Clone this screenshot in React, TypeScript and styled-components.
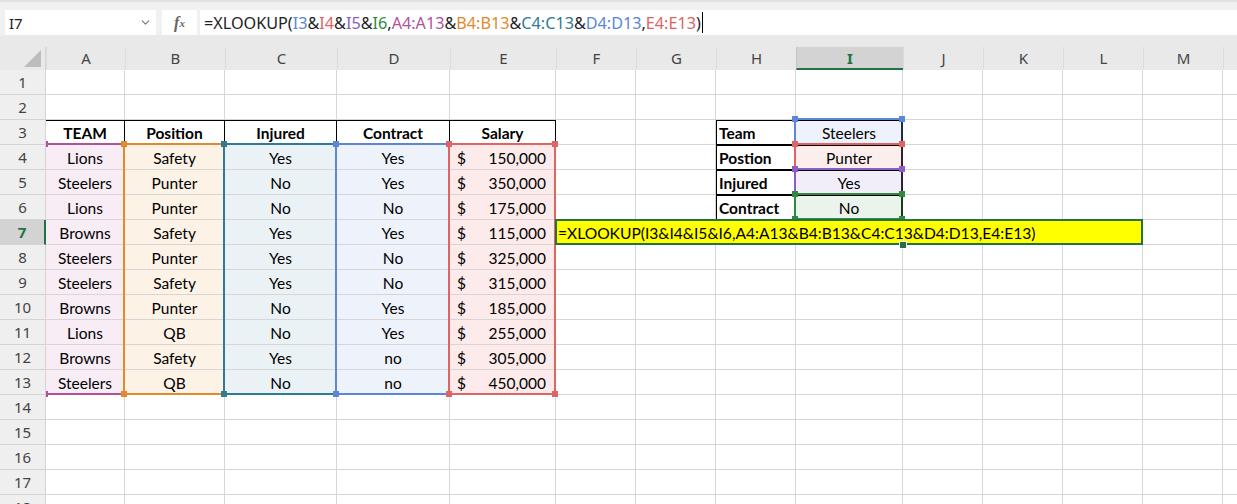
import React from "react";
import styled, { createGlobalStyle } from "styled-components";
import { ChevronDown } from "lucide-react";

const GlobalStyle = createGlobalStyle`
  html, body {
    margin: 0;
    padding: 0;
    background: #ffffff;
  }
`;

const COLS = ["A", "B", "C", "D", "E", "F", "G", "H", "I", "J", "K", "L", "M", "N"];
const WIDTHS = [79, 100, 112, 113, 106, 80, 80, 80, 107, 80, 80, 80, 80, 80];
const ROW_H = 25;
const HEAD_W = 46;
const ROWS = 18;

// left edge of each column inside the cell area
const colX = WIDTHS.reduce<number[]>((acc, w, i) => {
  acc.push(i === 0 ? 0 : acc[i - 1] + WIDTHS[i - 1]);
  return acc;
}, []);

const C = {
  magenta: "#b5509d",
  orange: "#e38a2c",
  teal: "#2f7b96",
  blue: "#5b86d9",
  red: "#e06464",
  purple: "#8a5ec4",
  green: "#2f8a3e",
  excel: "#217346",
};

type Spec = {
  v?: string;
  money?: string;
  bold?: boolean;
  align?: "left" | "center";
  fill?: string;
  bt?: boolean;
  br?: boolean;
  bb?: boolean;
  bl?: boolean;
};

const fills: Record<string, string> = {
  A: "#f8ecf5",
  B: "#fdf2e6",
  C: "#ebf2f5",
  D: "#eef2fb",
  E: "#fcebea",
};

const data = [
  ["Lions", "Safety", "Yes", "Yes", "150,000"],
  ["Steelers", "Punter", "No", "Yes", "350,000"],
  ["Lions", "Punter", "No", "No", "175,000"],
  ["Browns", "Safety", "Yes", "Yes", "115,000"],
  ["Steelers", "Punter", "Yes", "No", "325,000"],
  ["Steelers", "Safety", "Yes", "No", "315,000"],
  ["Browns", "Punter", "No", "Yes", "185,000"],
  ["Lions", "QB", "No", "Yes", "255,000"],
  ["Browns", "Safety", "Yes", "no", "305,000"],
  ["Steelers", "QB", "No", "no", "450,000"],
];

const cells: Record<string, Spec> = {};
["TEAM", "Position", "Injured", "Contract", "Salary"].forEach((h, i) => {
  cells[COLS[i] + 3] = { v: h, bold: true, bt: true, br: true };
});
data.forEach((row, r) => {
  row.forEach((v, i) => {
    const key = COLS[i] + (r + 4);
    cells[key] = i === 4 ? { money: v, fill: fills.E } : { v, fill: fills[COLS[i]] };
  });
});
const lookup = [
  ["Team", "Steelers", "#edf2fc"],
  ["Postion", "Punter", "#fdeeee"],
  ["Injured", "Yes", "#f2eef9"],
  ["Contract", "No", "#ebf4ec"],
];
lookup.forEach(([label, value, fill], i) => {
  cells["H" + (i + 3)] = { v: label, bold: true, align: "left", bt: true, bl: true, bb: true, br: true };
  cells["I" + (i + 3)] = { v: value, fill, bt: true, br: true, bb: true };
});

type Range = { c0: number; c1: number; r0: number; r1: number; color: string; edge?: string };
const ranges: Range[] = [
  { c0: 0, c1: 0, r0: 4, r1: 13, color: C.magenta },
  { c0: 1, c1: 1, r0: 4, r1: 13, color: C.orange },
  { c0: 2, c1: 2, r0: 4, r1: 13, color: C.teal },
  { c0: 3, c1: 3, r0: 4, r1: 13, color: C.blue },
  { c0: 4, c1: 4, r0: 4, r1: 13, color: C.red },
  { c0: 8, c1: 8, r0: 3, r1: 3, color: C.blue, edge: "#1f2a44" },
  { c0: 8, c1: 8, r0: 4, r1: 4, color: C.red, edge: "#3a1f22" },
  { c0: 8, c1: 8, r0: 5, r1: 5, color: C.purple, edge: "#2c2240" },
  { c0: 8, c1: 8, r0: 6, r1: 6, color: C.green, edge: "#1b3a22" },
];

const formulaParts: [string, string][] = [
  ["=XLOOKUP(", "#222"],
  ["I3", C.blue],
  ["&", "#222"],
  ["I4", C.red],
  ["&", "#222"],
  ["I5", C.purple],
  ["&", "#222"],
  ["I6", C.green],
  [",", "#222"],
  ["A4:A13", C.magenta],
  ["&", "#222"],
  ["B4:B13", C.orange],
  ["&", "#222"],
  ["C4:C13", C.teal],
  ["&", "#222"],
  ["D4:D13", C.blue],
  [",", "#222"],
  ["E4:E13", C.red],
  [")", "#222"],
];

const Window = styled.div`
  width: 1237px;
  height: 504px;
  overflow: hidden;
  background: #fff;
  display: flex;
  flex-direction: column;
`;

const FormulaBar = styled.div`
  height: 35px;
  box-sizing: border-box;
  padding: 8px 0 0 5px;
  display: flex;
  background: #f1f1f1;
  border-top: 2px solid #e2e2e2;
  flex-shrink: 0;
`;

const NameBox = styled.div`
  width: 151px;
  display: flex;
  align-items: center;
  justify-content: space-between;
  background: #fff;
  padding: 0 4px 0 4px;
  box-sizing: border-box;
  font-family: "Noto Sans", "Open Sans", sans-serif;
  font-size: 15px;
  color: #222;
`;

const FxBox = styled.div`
  width: 35px;
  margin-left: 6px;
  background: #fff;
  display: flex;
  align-items: center;
  justify-content: center;
  font-family: "Liberation Serif", serif;
  font-style: italic;
  font-weight: bold;
  font-size: 16px;
  color: #666;

  sub {
    font-size: 11px;
    vertical-align: -2px;
  }
`;

const FormulaInput = styled.div`
  flex: 1;
  margin-left: 3px;
  background: #fff;
  display: flex;
  align-items: center;
  padding-left: 4px;
  font-family: "Noto Sans", "Open Sans", sans-serif;
  font-size: 16.2px;
  white-space: nowrap;
`;

const Caret = styled.span`
  display: inline-block;
  width: 1px;
  height: 21px;
  background: #000;
  margin-left: 1px;
`;

const HeaderGap = styled.div`
  height: 12px;
  background: #e9e9e9;
  flex-shrink: 0;
`;

const Sheet = styled.div`
  position: relative;
  display: grid;
  grid-template-columns: ${HEAD_W}px ${WIDTHS.map((w) => w + "px").join(" ")};
  grid-template-rows: 23px repeat(${ROWS}, ${ROW_H}px);
  background: #fff;
`;

const Corner = styled.div`
  background: #e9e9e9;
  display: flex;
  align-items: flex-end;
  justify-content: flex-end;
  padding: 0 4px 3px 0;
  border-right: 1px solid #d6d6d6;
`;

const ColHead = styled.div<{ $active?: boolean }>`
  background: ${(p) => (p.$active ? "#d3d3d3" : "#e9e9e9")};
  border-left: 1px solid ${(p) => (p.$active ? "#c4c4c4" : "#dcdcdc")};
  border-bottom: 2px solid ${(p) => (p.$active ? C.excel : "#e9e9e9")};
  box-sizing: border-box;
  display: flex;
  align-items: center;
  justify-content: center;
  font-family: "Noto Sans", "Open Sans", sans-serif;
  font-size: 15px;
  color: ${(p) => (p.$active ? C.excel : "#444")};
  font-weight: ${(p) => (p.$active ? "bold" : "normal")};
  padding-top: 1px;
`;

const RowHead = styled.div<{ $active?: boolean }>`
  background: ${(p) => (p.$active ? "#d3d3d3" : "#efefef")};
  border-bottom: 1px solid #d4d4d4;
  border-right: ${(p) => (p.$active ? `2px solid ${C.excel}` : "1px solid #d4d4d4")};
  box-sizing: border-box;
  display: flex;
  align-items: center;
  justify-content: center;
  font-family: "Noto Sans", "Open Sans", sans-serif;
  font-size: 15px;
  color: ${(p) => (p.$active ? C.excel : "#444")};
  font-weight: ${(p) => (p.$active ? "bold" : "normal")};
`;

const Cell = styled.div<{
  $fill?: string;
  $bold?: boolean;
  $align?: string;
  $bt?: boolean;
  $bl?: boolean;
  $br?: boolean;
  $bb?: boolean;
}>`
  box-sizing: border-box;
  background: ${(p) => p.$fill || "#fff"};
  border-right: 1px solid ${(p) => (p.$br ? "#000" : "#d6d6d6")};
  border-bottom: 1px solid ${(p) => (p.$bb ? "#000" : "#d6d6d6")};
  box-shadow: ${(p) =>
    [p.$bt ? "inset 0 1px 0 #000" : "", p.$bl ? "inset 1px 0 0 #000" : ""].filter(Boolean).join(", ") || "none"};
  display: flex;
  align-items: center;
  justify-content: ${(p) => (p.$align === "left" ? "flex-start" : "center")};
  padding: 1px 3px 0 3px;
  font-family: Lato, "Liberation Sans", sans-serif;
  font-size: 15.5px;
  font-weight: ${(p) => (p.$bold ? "bold" : "normal")};
  color: #000;
  white-space: nowrap;
  overflow: hidden;
`;

const Money = styled.div`
  flex: 1;
  display: flex;
  justify-content: space-between;
  padding: 0 6px 0 4px;
`;

const Overlay = styled.div`
  position: absolute;
  left: ${HEAD_W}px;
  top: 23px;
  right: 0;
  bottom: 0;
  overflow: hidden;
  pointer-events: none;
`;

const RangeBox = styled.div<{ $color: string; $edge?: string }>`
  position: absolute;
  box-sizing: border-box;
  border: 2px solid ${(p) => p.$color};
  border-right-color: ${(p) => p.$edge || p.$color};
`;

const Handle = styled.span<{ $color: string; $x: "l" | "r"; $y: "t" | "b" }>`
  position: absolute;
  width: 6px;
  height: 6px;
  background: ${(p) => p.$color};
  ${(p) => (p.$x === "l" ? "left: -4px;" : "right: -4px;")}
  ${(p) => (p.$y === "t" ? "top: -4px;" : "bottom: -4px;")}
`;

const EditBox = styled.div`
  position: absolute;
  box-sizing: border-box;
  background: #ffff00;
  border: 2px solid ${C.excel};
  display: flex;
  align-items: center;
  padding: 1px 0 0 1px;
  font-family: Lato, "Liberation Sans", sans-serif;
  font-size: 15.6px;
  color: #000;
  white-space: nowrap;
`;

const FillHandle = styled.span`
  position: absolute;
  width: 6px;
  height: 6px;
  background: ${C.excel};
  border: 1px solid #fff;
`;

const rowTop = (r: number) => (r - 1) * ROW_H;

export default function App() {
  const grid: React.ReactNode[] = [];
  grid.push(
    <Corner key="corner">
      <svg width="17" height="17" viewBox="0 0 17 17">
        <polygon points="17,0 17,17 0,17" fill="#bdbdbd" />
      </svg>
    </Corner>
  );
  COLS.forEach((c) =>
    grid.push(
      <ColHead key={"h" + c} $active={c === "I"}>
        {c === "N" ? "" : c}
      </ColHead>
    )
  );
  for (let r = 1; r <= ROWS; r++) {
    grid.push(
      <RowHead key={"r" + r} $active={r === 7}>
        {r}
      </RowHead>
    );
    COLS.forEach((c) => {
      const s = cells[c + r] || {};
      grid.push(
        <Cell
          key={c + r}
          $fill={s.fill}
          $bold={s.bold}
          $align={s.align}
          $bt={s.bt}
          $bl={s.bl}
          $br={s.br}
          $bb={s.bb}
        >
          {s.money ? (
            <Money>
              <span>$</span>
              <span>{s.money}</span>
            </Money>
          ) : (
            s.v
          )}
        </Cell>
      );
    });
  }

  return (
    <>
      <GlobalStyle />
      <Window>
        <FormulaBar>
          <NameBox>
            <span>I7</span>
            <ChevronDown size={13} color="#777" strokeWidth={2} />
          </NameBox>
          <FxBox>
            f<sub>x</sub>
          </FxBox>
          <FormulaInput>
            {formulaParts.map(([t, col], i) => (
              <span key={i} style={{ color: col }}>
                {t}
              </span>
            ))}
            <Caret />
          </FormulaInput>
        </FormulaBar>
        <HeaderGap />
        <Sheet>
          {grid}
          <Overlay>
            {ranges.map((g, i) => (
              <RangeBox
                key={i}
                $color={g.color}
                $edge={g.edge}
                style={{
                  left: colX[g.c0] - 2,
                  top: rowTop(g.r0) - 2,
                  width: colX[g.c1] + WIDTHS[g.c1] - colX[g.c0] + 2,
                  height: (g.r1 - g.r0 + 1) * ROW_H + 2,
                }}
              >
                <Handle $color={g.color} $x="l" $y="t" />
                <Handle $color={g.color} $x="r" $y="t" />
                <Handle $color={g.color} $x="l" $y="b" />
                <Handle $color={g.color} $x="r" $y="b" />
              </RangeBox>
            ))}
            <EditBox
              style={{
                left: colX[5] - 1,
                top: rowTop(7) - 1,
                width: colX[11] + WIDTHS[11] - colX[5] + 1,
                height: ROW_H + 1,
              }}
            >
              =XLOOKUP(I3&amp;I4&amp;I5&amp;I6,A4:A13&amp;B4:B13&amp;C4:C13&amp;D4:D13,E4:E13)
            </EditBox>
            <FillHandle style={{ left: colX[8] + WIDTHS[8] - 4, top: rowTop(8) - 4 }} />
          </Overlay>
        </Sheet>
      </Window>
    </>
  );
}
